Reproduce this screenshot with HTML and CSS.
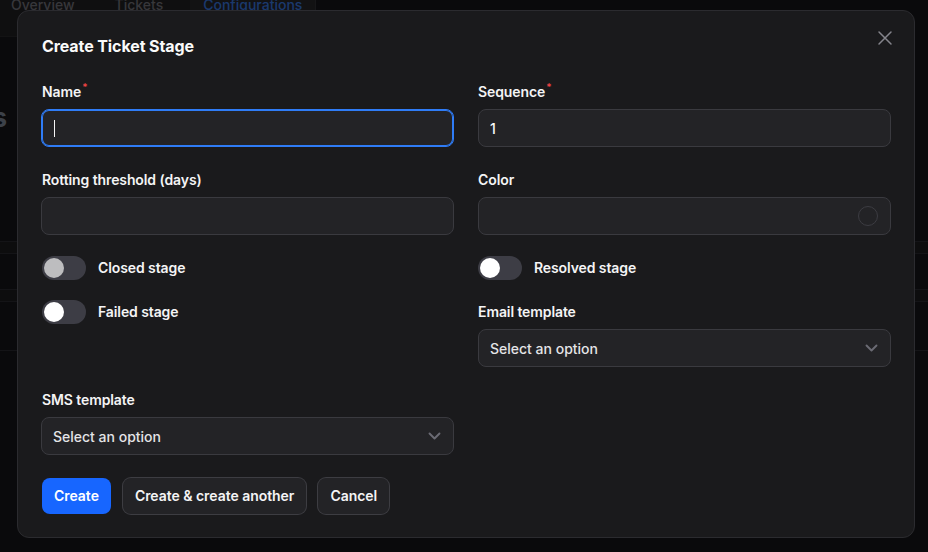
FILE: index.html
```html
<!DOCTYPE html>
<html lang="en">
<head>
<meta charset="UTF-8" />
<meta name="viewport" content="width=device-width, initial-scale=1" />
<title>Create Ticket Stage</title>
<link rel="stylesheet" href="styles.css">
</head>
<body>

<!-- Page behind the dialog -->
<div class="page">
  <nav class="tabs">
    <span class="tab">Overview</span>
    <span class="tab">Tickets</span>
    <span class="tab active">Configurations</span>
  </nav>
  <div class="page-head">
    <h1 class="page-title">Ticket Stages</h1>
  </div>
  <div class="table">
    <div class="table-head"></div>
    <div class="table-row"></div>
    <div class="table-head"></div>
    <div class="table-row tall"></div>
  </div>
</div>

<div class="backdrop"></div>

<!-- Create dialog -->
<div class="modal" role="dialog" aria-modal="true" aria-labelledby="modal-title">
  <button class="modal-close" aria-label="Close">
    <svg width="24" height="24" viewBox="0 0 24 24" fill="none" stroke="currentColor" stroke-width="1.5" stroke-linecap="round"><path d="M6 18 18 6M6 6l12 12"/></svg>
  </button>

  <h2 class="modal-title" id="modal-title">Create Ticket Stage</h2>

  <form class="form-grid">
    <div class="field">
      <label class="label" for="name">Name<sup class="req">*</sup></label>
      <div class="control focused">
        <input id="name" type="text" />
        <span class="caret"></span>
      </div>
    </div>

    <div class="field">
      <label class="label" for="sequence">Sequence<sup class="req">*</sup></label>
      <div class="control">
        <input id="sequence" type="text" value="1" />
      </div>
    </div>

    <div class="field">
      <label class="label" for="rotting">Rotting threshold (days)</label>
      <div class="control">
        <input id="rotting" type="text" />
      </div>
    </div>

    <div class="field">
      <label class="label" for="color">Color</label>
      <div class="control control-color">
        <input id="color" type="text" />
        <span class="swatch"></span>
      </div>
    </div>

    <div class="toggle-row">
      <span class="switch"><span class="knob muted"></span></span>
      <span class="toggle-label">Closed stage</span>
    </div>

    <div class="toggle-row">
      <span class="switch"><span class="knob"></span></span>
      <span class="toggle-label">Resolved stage</span>
    </div>

    <div class="toggle-row tight">
      <span class="switch"><span class="knob"></span></span>
      <span class="toggle-label">Failed stage</span>
    </div>

    <div class="field tight">
      <label class="label" for="email-template">Email template</label>
      <div class="control">
        <select id="email-template"><option>Select an option</option></select>
        <svg class="chevron" width="25" height="25" viewBox="0 0 20 20" fill="none" stroke="currentColor" stroke-width="1.5" stroke-linecap="round" stroke-linejoin="round"><path d="m6 8 4 4 4-4"/></svg>
      </div>
    </div>

    <div class="field">
      <label class="label" for="sms-template">SMS template</label>
      <div class="control">
        <select id="sms-template"><option>Select an option</option></select>
        <svg class="chevron" width="25" height="25" viewBox="0 0 20 20" fill="none" stroke="currentColor" stroke-width="1.5" stroke-linecap="round" stroke-linejoin="round"><path d="m6 8 4 4 4-4"/></svg>
      </div>
    </div>
  </form>

  <div class="actions">
    <button class="btn btn-primary">Create</button>
    <button class="btn btn-secondary">Create &amp; create another</button>
    <button class="btn btn-secondary">Cancel</button>
  </div>
</div>

</body>
</html>
```

FILE: styles.css
```css
* {
  box-sizing: border-box;
}
body {
  margin: 0;
  height: 552px;
  overflow: hidden;
  background: #18181b;
  color: #fafafa;
  font-family: Inter, "Noto Sans", sans-serif;
}

/* Page behind the dialog (only its edges show) */
.tabs {
  display: flex;
  gap: 14px;
  width: 316px;
  height: 53px;
  margin-top: -16px;
  background: #222225;
  border-right: 1px solid #333338;
  border-bottom: 1px solid #2a2a2e;
}
.tab {
  padding: 11px 13px 0;
  font-size: 14px;
  line-height: 20px;
  font-weight: 500;
  color: #7a7a82;
}
.tab:first-child {
  margin-left: -2px;
}
.tab.active {
  background: #28282c;
  color: #3b7ff0;
}
.page-head {
  display: flex;
  justify-content: flex-end;
  width: 7px;
  padding-top: 66px;
}
.page-title {
  margin: 0;
  flex-shrink: 0;
  white-space: nowrap;
  font-size: 26px;
  line-height: 30px;
  font-weight: 700;
  color: #8591a3;
}
.table {
  margin-top: 108px;
  border-top: 1px solid #2e2e33;
}
.table-head {
  height: 12px;
  background: #1d1d20;
  border-bottom: 1px solid #2e2e33;
}
.table-row {
  height: 36px;
  border-bottom: 1px solid #2e2e33;
}
.table-row.tall {
  height: 49px;
}

.backdrop {
  position: fixed;
  inset: 0;
  background: rgba(0, 0, 0, 0.55);
}

/* Dialog */
.modal {
  position: fixed;
  left: 17px;
  top: 10px;
  width: 898px;
  padding: 23px;
  background: #1a1a1c;
  border: 1px solid #2b2b2f;
  border-radius: 12px;
}
.modal-close {
  position: absolute;
  top: 15px;
  right: 17px;
  width: 24px;
  height: 24px;
  padding: 0;
  border: none;
  background: none;
  color: #85858c;
  cursor: pointer;
}
.modal-close svg {
  display: block;
}
.modal-title {
  margin: 0 0 22px 1px;
  font-size: 16px;
  line-height: 24px;
  font-weight: 700;
  letter-spacing: -0.1px;
  color: #fafafa;
}

/* Form */
.form-grid {
  display: grid;
  grid-template-columns: 1fr 1fr;
  column-gap: 24px;
  row-gap: 21px;
}
.form-grid .tight {
  margin-top: -1px;
}
.field {
  display: flex;
  flex-direction: column;
  gap: 5px;
}
.label {
  padding-left: 1px;
  font-size: 14px;
  line-height: 24px;
  font-weight: 600;
  letter-spacing: -0.1px;
  color: #f4f4f5;
}
.form-grid > :nth-child(even) .label,
.form-grid > .toggle-row:nth-child(even) {
  padding-left: 0;
}
.req {
  margin-left: 1px;
  font-size: 10px;
  line-height: 0;
  color: #ef4444;
}
.control {
  position: relative;
  display: flex;
  align-items: center;
  height: 38px;
  background: #232326;
  border: 1px solid #3a3a3f;
  border-radius: 8px;
}
.control.focused {
  border-color: #2f7cf6;
  box-shadow: inset 0 0 0 1px #2f7cf6;
}
.control input,
.control select {
  flex: 1;
  min-width: 0;
  height: 100%;
  padding: 0 11px;
  background: transparent;
  border: none;
  outline: none;
  color: #fafafa;
  font: 500 14px Inter, "Noto Sans", sans-serif;
}
.control select {
  appearance: none;
  color: #e4e4e7;
}
.caret {
  position: absolute;
  left: 12px;
  top: 10px;
  width: 1px;
  height: 17px;
  background: #f4f4f5;
}
.control-color {
  padding-right: 12px;
}
.swatch {
  width: 20px;
  height: 20px;
  border-radius: 50%;
  border: 1.5px solid #3c3c42;
}
.chevron {
  position: absolute;
  right: 6px;
  top: 50%;
  transform: translateY(-50%);
  color: #6b6b74;
  pointer-events: none;
}

/* Toggles */
.toggle-row {
  display: flex;
  align-items: center;
  gap: 12px;
  height: 24px;
  padding-left: 1px;
}
.switch {
  display: flex;
  align-items: center;
  width: 44px;
  height: 24px;
  padding: 2px;
  border-radius: 12px;
  background: #3d3d45;
}
.knob {
  width: 20px;
  height: 20px;
  border-radius: 50%;
  background: #ffffff;
}
.knob.muted {
  background: #bdbdbf;
}
.toggle-label {
  font-size: 14px;
  line-height: 24px;
  font-weight: 600;
  letter-spacing: -0.1px;
  color: #f4f4f5;
}

/* Actions */
.actions {
  display: flex;
  gap: 12px;
  margin-top: 23px;
  padding-left: 1px;
}
.btn {
  height: 36px;
  padding: 0 12px;
  border: none;
  border-radius: 8px;
  font: 600 14px/20px Inter, "Noto Sans", sans-serif;
  letter-spacing: -0.04px;
  cursor: pointer;
}
.btn-primary {
  background: #1766ff;
  color: #ffffff;
}
.btn-secondary {
  background: #232326;
  color: #f4f4f5;
  box-shadow: 0 0 0 1px #3d3d42;
}
```
